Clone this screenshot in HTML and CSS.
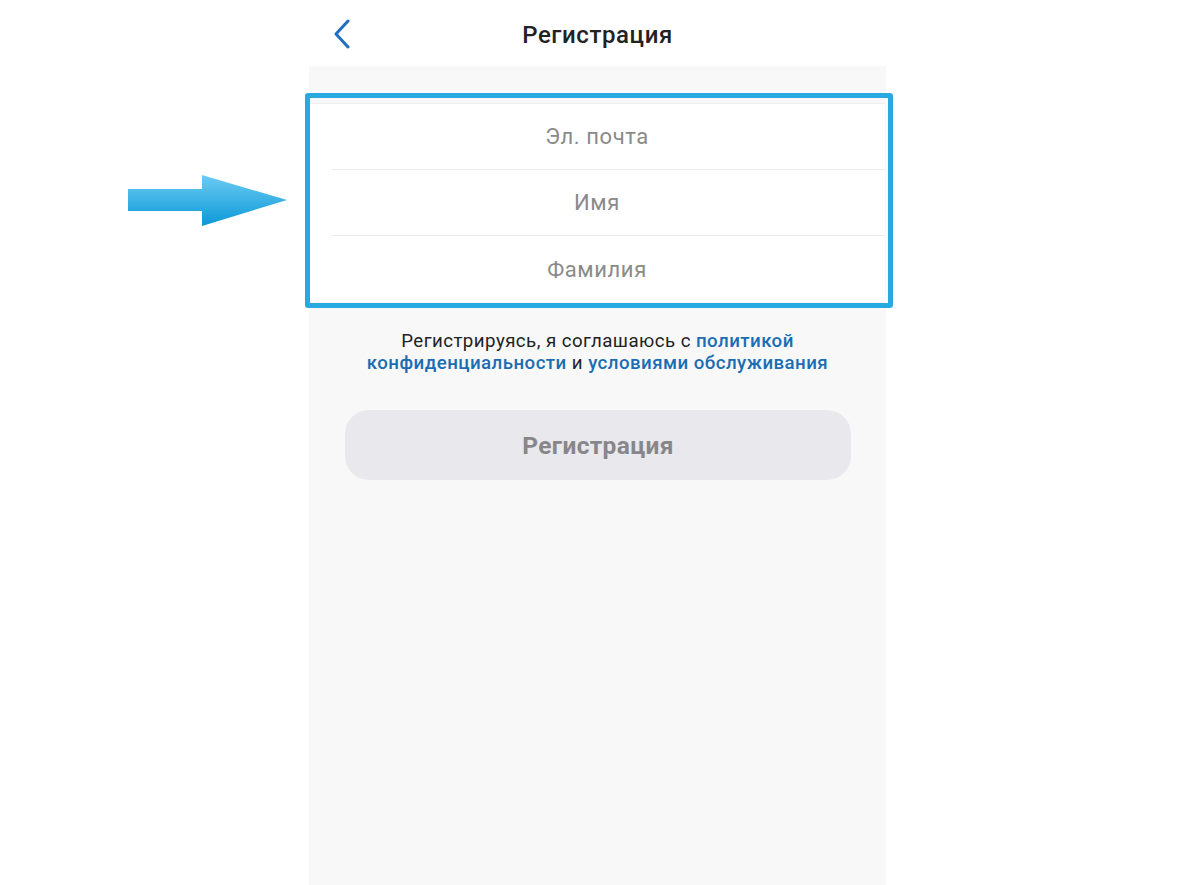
FILE: index.html
```html
<!DOCTYPE html>
<html lang="ru">
<head>
<meta charset="utf-8">
<title>Регистрация</title>
<link rel="stylesheet" href="styles.css">
</head>
<body>
<div class="page">
  <div class="side">
    <svg class="pointer" width="160" height="52" viewBox="0 0 160 52" aria-hidden="true">
      <defs>
        <linearGradient id="ag" x1="0" y1="0" x2="0" y2="1">
          <stop offset="0" stop-color="#6ccbf3"/>
          <stop offset="1" stop-color="#0b98d7"/>
        </linearGradient>
      </defs>
      <polygon points="0,14 74,14 74,0 159,25 74,51 74,36 0,36" fill="url(#ag)"/>
    </svg>
  </div>
  <div class="phone">
    <header class="topbar">
      <svg class="back" width="18" height="30" viewBox="0 0 18 30" aria-hidden="true">
        <path d="M15 2 L3 15 L15 28" fill="none" stroke="#1f6fc0" stroke-width="3" stroke-linecap="round" stroke-linejoin="round"/>
      </svg>
      <h1 class="title">Регистрация</h1>
      <span></span>
    </header>
    <main class="content">
      <div class="card">
        <div class="field">Эл. почта</div>
        <div class="field">Имя</div>
        <div class="field">Фамилия</div>
      </div>
      <p class="terms">Регистрируясь, я соглашаюсь с <a class="link">политикой</a><br><a class="link">конфиденциальности</a> и <a class="link">условиями обслуживания</a></p>
      <button class="submit" type="button">Регистрация</button>
    </main>
  </div>
  <div class="side"></div>
</div>
</body>
</html>
```
FILE: styles.css
```css
* { box-sizing: border-box; }
html, body { margin: 0; padding: 0; }
body {
  background: #ffffff;
  font-family: Roboto, "Noto Sans", "Liberation Sans", sans-serif;
  width: 1200px;
  height: 885px;
  overflow: hidden;
}
.page {
  display: grid;
  grid-template-columns: 309px 577px 1fr;
  height: 885px;
}
.side { position: relative; }
.pointer {
  position: absolute;
  left: 128px;
  top: 175px;
}
.phone {
  display: flex;
  flex-direction: column;
  height: 885px;
}
.topbar {
  height: 66px;
  background: #ffffff;
  display: grid;
  grid-template-columns: 60px 1fr 60px;
  align-items: center;
  padding-top: 3px;
}
.back { margin-left: 24px; margin-top: -2px; }
.title {
  margin: 0;
  text-align: center;
  font-size: 24px;
  font-weight: 500;
  color: #222222;
  letter-spacing: 0.6px;
}
.content {
  flex: 1;
  background: #f8f8f8;
  display: flex;
  flex-direction: column;
  align-items: stretch;
  padding-top: 37px;
}
.card {
  position: relative;
  background: #ffffff;
  border-top: 1px solid #eeeeee;
  margin-right: 1px;
}
.card::after {
  content: "";
  position: absolute;
  left: -4px;
  right: -8px;
  top: -11px;
  bottom: -6px;
  border: 5px solid #29a9e1;
  border-radius: 3px;
  pointer-events: none;
}
.field {
  height: 66px;
  display: flex;
  align-items: center;
  justify-content: center;
  font-size: 22px;
  letter-spacing: 0.6px;
  color: #8a8a8a;
  margin-left: 23px;
  padding-right: 23px;
  border-bottom: 1px solid #ececec;
}
.field:last-child { border-bottom: none; }
.terms {
  margin: 28px 0 0;
  text-align: center;
  font-size: 18.7px;
  line-height: 22px;
  letter-spacing: 0.45px;
  color: #222222;
}
.link {
  color: #1b6db3;
  font-weight: 500;
}
.submit {
  margin: 36px 35px 0 36px;
  height: 70px;
  border: none;
  border-radius: 24px;
  background: #e9e8ed;
  color: #87878b;
  font-family: Roboto, "Noto Sans", "Liberation Sans", sans-serif;
  font-size: 24.5px;
  font-weight: 700;
  letter-spacing: 0.35px;
}
```
